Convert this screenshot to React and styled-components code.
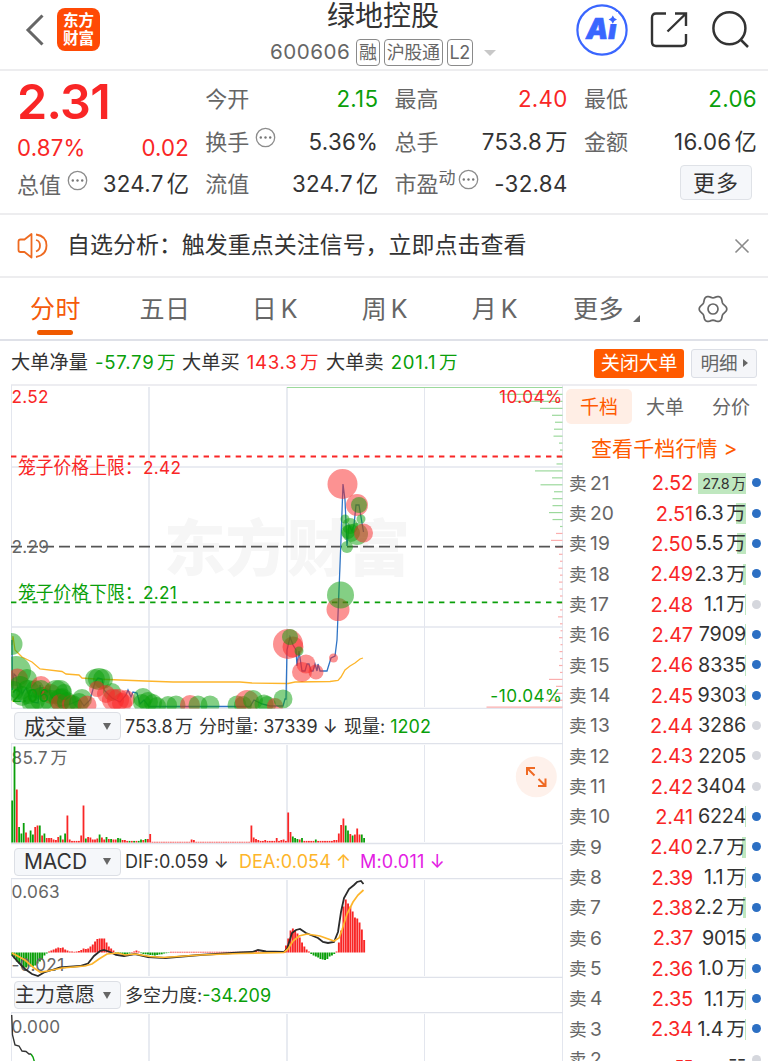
import React from "react"
import styled, { createGlobalStyle, css } from "styled-components"

const red = "#f92626"
const green = "#0a9f0a"
const orange = "#f55a0a"
const ink = "#333333"
const grey = "#666666"
const sans = `Inter, "Noto Sans CJK SC", sans-serif`

const GlobalStyle = createGlobalStyle`
  * { box-sizing: border-box; }
  html, body { margin: 0; padding: 0; }
  body {
    width: 768px;
    height: 1061px;
    overflow: hidden;
    background: #fff;
    color: ${ink};
    font-family: ${sans};
    line-height: 1;
    font-weight: 400;
  }
`

const Page = styled.div`
  width: 768px;
  height: 1061px;
  overflow: hidden;
  display: flex;
  flex-direction: column;
`

/* ---------- header ---------- */

const Header = styled.header`
  flex: none;
  height: 71px;
  border-bottom: 2px solid #ededef;
  display: grid;
  grid-template-columns: 230px 306px 1fr;
`

const HeaderLeft = styled.div`
  display: flex;
  align-items: flex-start;
  padding: 8px 0 0 24px;
`

const BackIcon = styled.svg`
  margin: 5px 13px 0 0;
`

const Logo = styled.div`
  width: 43px;
  height: 43px;
  border-radius: 8px;
  background: #ff4a05;
  color: #fff;
  font-size: 15.5px;
  font-weight: 700;
  line-height: 17.5px;
  text-align: center;
  padding-top: 4px;
`

const HeaderTitle = styled.div`
  display: flex;
  flex-direction: column;
  align-items: center;
`

const StockName = styled.h1`
  margin: 1px 0 0;
  font-size: 28px;
  line-height: 30px;
  font-weight: 400;
`

const CodeRow = styled.div`
  display: flex;
  align-items: center;
  margin-top: 8px;
  height: 27px;
  color: ${grey};
  font-size: 20.6px;
  letter-spacing: 0.45px;
`

const Tag = styled.span`
  height: 27px;
  line-height: 25px;
  margin-left: ${p => p.$gap || 4}px;
  padding: 0 2px;
  border: 1px solid #8a8a8a;
  border-radius: 4px;
  font-size: 18px;
  letter-spacing: -0.4px;
`

const Caret = styled.span`
  margin-left: 11px;
  border: 6px solid transparent;
  border-top-color: #c8c8c8;
  border-bottom: 0;
`

const HeaderRight = styled.div`
  display: flex;
  align-items: flex-start;
  padding: 3px 0 0 39px;
`

const ActionIcon = styled.svg`
  margin: ${p => p.$m};
`

/* ---------- quote ---------- */

const Quote = styled.section`
  flex: none;
  height: 144px;
  border-bottom: 2px solid #ededef;
  padding: 7px 12px 0 17px;
  display: grid;
  grid-template-columns: 171px 172px 172px 172px;
  column-gap: 17.3px;
`

const QuoteCol = styled.div`
  display: flex;
  flex-direction: column;
`

const BigPrice = styled.div`
  height: 49px;
  color: ${red};
  font-size: 48.5px;
  line-height: 47px;
  font-weight: 600;
  letter-spacing: -0.7px;
`

const Change = styled.div`
  height: 42px;
  display: flex;
  justify-content: space-between;
  align-items: center;
  color: ${red};
  font-size: 22.2px;
  letter-spacing: 0.2px;
  margin-right: -1px;
`

const Item = styled.div`
  height: ${p => p.$h || 42.5}px;
  display: flex;
  align-items: center;
  font-size: 22px;
  color: ${grey};
  white-space: nowrap;
`

const Value = styled.span`
  margin-left: auto;
  margin-right: -1px;
  font-size: 22.3px;
  letter-spacing: 0.3px;
  color: ${p => p.$color || ink};
`

const Unit = styled.span`
  margin-left: 0.14em;
  letter-spacing: 0;
`

const Sup = styled.span`
  font-size: 17px;
  margin: -11px 2px 0 0;
`

const DotsSvg = styled.svg`
  margin: -9px 0 0 ${p => p.$gap}px;
`

const MoreButton = styled.button`
  margin: 2px 4px 0 auto;
  width: 72px;
  height: 35px;
  padding: 0;
  border: 1px solid #dfe2e7;
  border-radius: 4px;
  background: #f5f7fa;
  color: ${ink};
  font: 22px/34px ${sans};
  letter-spacing: 1px;
`

/* ---------- notice ---------- */

const Notice = styled.section`
  flex: none;
  height: 63px;
  border-bottom: 2px solid #ededef;
  display: flex;
  align-items: center;
  padding: 0 18px 0 17px;
`

const NoticeText = styled.p`
  flex: 1;
  margin: 0 0 0 18px;
  font-size: 22.97px;
`

/* ---------- period tabs ---------- */

const Tabs = styled.nav`
  flex: none;
  height: 63px;
  border-bottom: 2px solid #dfe1e8;
  display: grid;
  grid-template-columns: 109px 110px 110px 110px 110px 110px 109px;
`

const Tab = styled.div`
  position: relative;
  display: flex;
  justify-content: center;
  padding: 17px 0 0 2px;
  font-size: 25px;
  line-height: 29px;
  letter-spacing: 0.5px;
  color: ${p => (p.$active ? orange : grey)};
  word-spacing: -4px;

  ${p =>
    p.$active &&
    css`
      &::after {
        content: "";
        position: absolute;
        left: 37px;
        bottom: 4px;
        width: 36px;
        height: 5px;
        border-radius: 3px;
        background: #f05a00;
      }
    `}
`

const GearSvg = styled.svg`
  margin: -1px 0 0 -4px;
`

const Corner = styled.span`
  align-self: flex-end;
  margin: 0 -3px 17px 9px;
  border-left: 7px solid transparent;
  border-bottom: 7px solid ${grey};
`

/* ---------- big-order summary ---------- */

const Summary = styled.section`
  flex: none;
  height: 45px;
  margin: 0 11px;
  padding-top: 1px;
  border-bottom: 2px solid #ededf1;
  display: flex;
  align-items: center;
  font-size: 19.2px;
  white-space: nowrap;
`

const Pair = styled.span`
  width: ${p => p.$w}px;
  letter-spacing: 0.05px;
  b {
    margin-left: 7px;
    font-size: 18.6px;
    font-weight: 400;
    letter-spacing: 0.75px;
    color: ${p => p.$color};
  }
`

const CloseOrders = styled.button`
  margin-left: auto;
  width: 90px;
  height: 29px;
  padding: 0;
  border: 0;
  border-radius: 3px;
  background: #ff5a00;
  color: #fff;
  font: 19.2px/29px ${sans};
`

const DetailButton = styled.button`
  margin-left: 7px;
  width: 66px;
  height: 29px;
  padding: 0;
  display: flex;
  align-items: center;
  justify-content: center;
  gap: 5px;
  border: 1px solid #dcdfe6;
  border-radius: 3px;
  background: #f5f6f9;
  color: ${grey};
  font: 18.6px/26px ${sans};

  &::after {
    content: "";
    border: 4px solid transparent;
    border-left: 5px solid ${grey};
    border-right: 0;
  }
`

/* ---------- body ---------- */

const Body = styled.main`
  flex: 1;
  min-height: 0;
  margin-top: -1px;
  display: grid;
  grid-template-columns: 563px 205px;
`

const Charts = styled.div`
  display: flex;
  flex-direction: column;
  overflow: hidden;
`

const Plot = styled.svg`
  flex: none;
  display: block;
  font-family: ${sans};
`

const IndicatorRow = styled.div`
  flex: none;
  height: ${p => p.$h}px;
  display: flex;
  align-items: center;
  padding-left: 14px;
  border-right: 1px solid #e3e6ee;
  font-size: 18px;
  white-space: nowrap;
`

const Select = styled.div`
  width: 107px;
  height: 28px;
  margin-right: 4px;
  display: flex;
  align-items: center;
  justify-content: ${p => (p.$tight ? "flex-start" : "center")};
  gap: ${p => (p.$tight ? 8 : 16)}px;
  border: 1px solid #dcdfe5;
  border-radius: 4px;
  background: #f5f7fa;
  font-size: ${p => p.$size}px;

  &::after {
    content: "";
    border: 4px solid transparent;
    border-top: 7px solid ${grey};
    border-bottom: 0;
  }
`

const Reading = styled.span`
  padding-top: 1px;
  color: ${p => p.$color || ink};
  width: ${p => p.$w}px;
  letter-spacing: ${p => p.$ls || 0}px;
`

/* ---------- order book ---------- */

const Book = styled.aside`
  overflow: hidden;
  padding: 4px 0 0 3px;
`

const BookTabs = styled.div`
  display: flex;
`

const BookTab = styled.div`
  width: 66px;
  height: 35px;
  line-height: 37px;
  border-radius: 5px;
  text-align: center;
  font-size: 19px;
  color: ${p => (p.$active ? "#ff5a00" : grey)};
  background: ${p => (p.$active ? "#ffeee5" : "none")};
`

const BookLink = styled.div`
  height: 44px;
  line-height: 49px;
  padding-left: 25px;
  color: #ff5a00;
  font-size: 21px;
  letter-spacing: 0.1px;
`

const Level = styled.div`
  height: 30.35px;
  display: grid;
  grid-template-columns: 48px 76px 53px 1fr;
  align-items: center;
  padding-left: 3px;
  font-size: 20px;
  white-space: nowrap;
`

const Side = styled.span`
  color: ${grey};
  font-size: 19.2px;
  i {
    font-style: normal;
    font-size: 17.6px;
    margin-right: 3.5px;
  }
`

const Ask = styled.span`
  color: ${red};
  text-align: right;
  letter-spacing: -0.2px;
`

const Volume = styled.span`
  height: 21px;
  line-height: 21px;
  display: flex;
  justify-content: flex-end;
  font-size: ${p => (p.$small ? 14.5 : 19.8)}px;
  letter-spacing: -0.2px;
  background: linear-gradient(#bfe7bf, #bfe7bf) right / ${p => p.$bar}px 100% no-repeat;
`

const Dot = styled.span`
  width: 9px;
  height: 9px;
  margin: -1px 0 0 6px;
  border-radius: 50%;
  background: ${p => (p.$on ? "#2c6fc3" : "#d5d7dd")};
`

/* ---------- data ---------- */

const levels = [
  ["21", "2.52", "27.8万", 48, 1],
  ["20", "2.51", "6.3万", 10, 1],
  ["19", "2.50", "5.5万", 9, 1],
  ["18", "2.49", "2.3万", 3.5, 1],
  ["17", "2.48", "1.1万", 1, 0],
  ["16", "2.47", "7909", 1, 1],
  ["15", "2.46", "8335", 1, 1],
  ["14", "2.45", "9303", 1, 1],
  ["13", "2.44", "3286", 0.5, 0],
  ["12", "2.43", "2205", 0.5, 0],
  ["11", "2.42", "3404", 0.5, 0],
  ["10", "2.41", "6224", 1, 1],
  ["9", "2.40", "2.7万", 4, 1],
  ["8", "2.39", "1.1万", 1, 1],
  ["7", "2.38", "2.2万", 3.5, 1],
  ["6", "2.37", "9015", 1, 1],
  ["5", "2.36", "1.0万", 1, 1],
  ["4", "2.35", "1.1万", 1, 1],
  ["3", "2.34", "1.4万", 1.5, 1],
  ["2", "--", "--", 0, 0],
]

const bubbles = [
  ["g", 11.5, 644, 11], ["g", 16, 671, 15], ["r", 17.5, 679, 10.5], ["g", 27, 679, 10],
  ["g", 20, 688, 12], ["g", 14, 691, 10], ["g", 28, 692, 12], ["g", 35, 689, 9],
  ["g", 22, 696, 10], ["g", 34, 700, 11], ["r", 41, 686, 10], ["g", 41, 690, 10],
  ["g", 42, 699, 12], ["g", 31, 704, 9], ["r", 51, 694, 10], ["g", 56, 692, 12],
  ["g", 60, 691, 11], ["g", 60, 700, 11], ["g", 51, 701, 11], ["g", 62, 698, 10],
  ["r", 60, 703, 9], ["g", 67, 702, 10], ["r", 71, 704, 9], ["g", 73, 704, 9],
  ["g", 79, 703, 10], ["g", 82, 699, 10], ["r", 87, 705, 9.5], ["g", 95, 679, 10],
  ["g", 99, 679, 11], ["g", 103, 679, 10], ["r", 97, 689, 8], ["g", 112, 692, 9],
  ["g", 64, 692, 8], ["r", 106, 694, 9], ["r", 113, 700, 11], ["r", 118, 700, 11],
  ["r", 126, 699, 9], ["r", 122, 703, 10], ["g", 143, 698, 10], ["g", 148, 702, 10],
  ["g", 142, 703, 9], ["g", 153, 703, 9], ["g", 168, 705, 9], ["g", 176, 705, 9.5],
  ["r", 190, 705, 10], ["g", 198, 705, 9.5], ["g", 210, 705, 9.5], ["g", 157, 706, 9],
  ["g", 237, 705, 9.5], ["g", 243, 705, 9], ["r", 247, 702, 12], ["g", 253, 700, 10],
  ["g", 264, 704, 9.5], ["g", 267, 705, 9], ["r", 275, 706, 8], ["g", 283, 699, 9.5],
  ["r", 288, 644, 15], ["r", 293, 647, 10.5], ["g", 290, 637, 8], ["g", 299, 651, 4.5],
  ["r", 306, 664, 9.5], ["r", 302, 672, 10], ["r", 316, 672, 7.5], ["r", 333.5, 658, 4.5],
  ["r", 338, 609.5, 11.5], ["g", 340.5, 595, 13.5], ["r", 342.5, 484, 15], ["r", 357, 505, 11],
  ["g", 359, 505, 8], ["g", 345, 519, 4.5], ["g", 361, 519, 4.5], ["g", 347, 547, 6],
  ["g", 350, 526, 8], ["g", 351, 533, 9], ["g", 348, 532, 7], ["g", 357, 534, 11],
  ["r", 363.5, 533, 9.5],
]

// left end of every depth line, 6.95px apart from the top of the price plot
const depth = [
  287, 500, 515, 540, 552, 555, 554, 553.5, 559, 560, 557, 556.5, 535, 552, 540.5, 554,
  552.5, 552.5, 549, 552.5, 560, 556, 551, 556, 559, 560, 558.5, 560, 559, 559.5, 560, 558,
  560, 558, 560, 560.5, 559, 560.5, 559.5, 560, 559, 560, 549, 556, 555, 546, 486.5,
]

const volume = {
  0: [42, "g"], 1: [96, "g"], 2: [53, "r"], 3: [15.5, "g"], 4: [9, "g"], 5: [19.5, "g"],
  6: [10, "r"], 7: [5, "r"], 8: [12, "g"], 9: [8, "g"], 10: [15.5, "r"], 11: [17, "r"],
  12: [17, "g"], 13: [7, "r"], 14: [9, "g"], 15: [4.5, "r"], 16: [4.5, "r"], 17: [4.5, "r"],
  18: [3, "r"], 19: [2.5, "r"], 20: [5.5, "r"], 21: [7, "g"], 22: [3, "r"], 23: [9, "g"],
  24: [27, "r"], 25: [3, "r"], 30: [7, "r"], 31: [37, "r"], 32: [4, "g"], 33: [5.5, "r"],
  34: [5, "r"], 35: [3, "r"], 36: [3, "r"], 37: [4, "r"], 38: [8, "g"], 39: [5, "r"],
  40: [3, "r"], 41: [5.5, "g"], 42: [3.5, "r"], 43: [3.5, "g"], 44: [3, "r"], 45: [3, "r"],
  46: [4.5, "g"], 47: [4, "g"], 48: [2.5, "r"], 49: [2.5, "r"], 56: [3, "g"], 57: [2.5, "r"],
  58: [3.5, "g"], 59: [3.5, "r"], 60: [8.5, "r"], 78: [3, "r"], 79: [2.5, "r"],
  104: [17, "r"], 105: [5, "r"], 106: [3.5, "r"], 107: [2.5, "r"], 110: [2.5, "r"],
  115: [4.5, "r"], 117: [2.5, "r"], 118: [3, "r"], 120: [30, "r"], 121: [10.5, "r"],
  122: [6, "g"], 123: [4.5, "g"], 124: [3.5, "g"], 125: [3, "r"], 126: [4.5, "g"],
  132: [3, "g"], 140: [2.5, "r"], 141: [2.5, "r"], 142: [9, "r"], 143: [17.5, "r"],
  144: [24, "r"], 145: [17, "g"], 146: [12, "g"], 147: [8.5, "r"], 148: [7, "g"],
  149: [8, "r"], 150: [14, "r"], 151: [8, "r"], 152: [8, "g"], 153: [4.5, "g"],
}

const volumeBars = Array.from({ length: 154 }, (_, i) => {
  if (volume[i]) return volume[i]
  const quiet = i > 60 && i < 104
  return [quiet ? 0.7 : 1.6, i > 48 && i < 60 && i % 2 ? "g" : "r"]
})

const macdBars = [
  -3, -6, -9, -11, -13, -15, -15, -14, -14, -14, -13, -11, -9, -7, -3, -1,
  1, 2, 3, 4, 5, 4.5, 5, 3, 2, 1, 1, 0.7, 1, 1.5, 2.5, 4, 3.5, 4, 6, 8,
  11, 13.5, 14, 14, 14, 10, 6, 4, 2, -0.7, -1.2, -1.7, -2, -2, -1.5, -1, 0.5, 1, 2, 1, -0.7,
  -1.5, -1.8, -2, -2.5, -2.7, -3, -2.5, -2, -1.8, -1, -0.7, -0.4,
  ...Array(35).fill(0.7), 1, 1.5, 1.5, 1, ...Array(10).fill(0.6), 1, 7,
  14, 22, 24, 22, 19, 15, 10, 6, 3, 1, -1.5, -3, -4, -5, -6.5, -7, -7.5, -6.5, -4, -3, -1.5, 1,
  10, 22, 46, 53, 49, 46, 41, 35, 34, 30, 23, 12.5,
]

const priceLine =
  "12,640 12.5,690 14,674 16,676 18,692 20,684 22,694 26,688 32,702 38,703 40,685 42,695 48,690 52,698 60,706 70,704 80,700 84,706 90,700 95,682 98,678 102,679 104,690 112,698 120,702 126,695 128,690 131,697 133,692 137,693 140,704 144,700 149,706.5 250,706.5 254,700 262,704 270,706 283,706 285,699 286,699 287,650 290,637 293,645 296,650 297,666 299,651 302,671 305,671 307,664 309,664 311,671 313,671 315,664 317,671 318,664 320,671 327,671 331,658 335,656 337,640 341,540 343,484 345,500 347,546 349,525 352,531 354,525 356,505 359,505 363.5,532"
const averageLine =
  "12,645 13,636 15,650 22,657 32,662 40,669 62,671.5 66,674 79,675 82,678 95,679 120,680 145,681 173,682 240,682 252,683 288,683.5 295,682 330,681.5 338,680.5 341,677 345,670 350,666 355,663 360,659 363,658"
const difLine =
  "12,955 18,962 25,969 32,974 38,976 44,972.5 52,970 60,967.5 80,966 88,963.5 94,956 100,951 104,950 110,952 116,955 124,956 135,954 148,957 165,958 200,955 240,952.5 252,952 258,950 266,951.5 284,952 287,949 292,933 296,930 300,929 306,933 318,938 323,942 328,943 334,942 338,932 341,912 344,898 349,889 354,885 357,882 361,881 363.5,884"
const deaLine =
  "12,953 25,960 34,968 40,972 48,971 62,968 85,966 92,964 99,959 107,954 118,953 125,955 135,954 150,956.5 163,957.5 200,955 240,953.5 284,952.5 288,949 293,941 299,936 307,934 320,936 334,941 339,938 342,930 347,914 353,902 358,895 363.5,890"

const paint = { r: red, g: green }

const gearPath =
  Array.from({ length: 73 }, (_, i) => {
    const a = (i * Math.PI) / 36
    const r = 12.5 + 1.3 * Math.cos(6 * a)
    return `${i ? "L" : "M"}${(15 + r * Math.cos(a)).toFixed(2)} ${(15 + r * Math.sin(a)).toFixed(2)}`
  }).join("") + "Z"

/* ---------- pieces ---------- */

const Amount = ({ children }) => {
  const unit = /[万亿]$/.test(children) ? children.slice(-1) : ""
  return (
    <>
      {unit ? children.slice(0, -1) : children}
      {unit && <Unit>{unit}</Unit>}
    </>
  )
}

const Dots = ({ gap = 6 }) => (
  <DotsSvg $gap={gap} width="21" height="21" viewBox="0 0 21 21">
    <circle cx="10.5" cy="10.5" r="9.2" fill="none" stroke="#8c8c8c" strokeWidth="1.3" />
    <g fill="#777">
      <circle cx="5.8" cy="10.5" r="1.2" />
      <circle cx="10.5" cy="10.5" r="1.2" />
      <circle cx="15.2" cy="10.5" r="1.2" />
    </g>
  </DotsSvg>
)

const Grid = ({ top, bottom }) => (
  <g stroke="#e3e6ee" fill="none">
    <path d={`M11.5 ${top}V${bottom}M562.5 ${top}V${bottom}`} />
    <path d={`M149 ${top + 2}V${bottom - 2}M287 ${top + 2}V${bottom - 2}`} strokeWidth="1.6" />
    <path d={`M424.5 ${top + 2}V${bottom - 2}`} />
  </g>
)

const PricePlot = () => (
  <Plot width="563" height="324" viewBox="0 385 563 324">
    <clipPath id="price">
      <rect x="11" y="385" width="552" height="323.5" />
    </clipPath>
    <text x="164" y="570.5" fontSize="61.5" fontWeight="900" fill="#f6f6f6">东方财富</text>
    <Grid top={385} bottom={709} />
    <path d="M11 467H563M11 627H563M11 708.5H563" stroke="#e3e6ee" strokeWidth="1.5" />
    <g strokeWidth="1.2">
      {depth.map((x, i) => (
        <path
          key={i}
          d={`M${x} ${387.5 + i * 6.95}H562.5`}
          stroke={i < 21 ? "#9cd99c" : "#fbaeae"}
        />
      ))}
    </g>
    <path d="M11 456.5H563" stroke={red} strokeWidth="1.8" strokeDasharray="5.4 5.3" />
    <path d="M11 546.7H563" stroke="#555" strokeWidth="1.7" strokeDasharray="11 5" />
    <path d="M11 602.4H563" stroke={green} strokeWidth="1.8" strokeDasharray="5.4 5.3" />
    <g fontSize="17.2" letterSpacing="0.3">
      <text x="11.5" y="402.5" fill={red}>2.52</text>
      <text x="562.5" y="402.5" fill={red} textAnchor="end" letterSpacing="0.45">10.04%</text>
      <text x="11.5" y="552.5" fill={grey}>2.29</text>
      <text x="562.5" y="701.5" fill={green} textAnchor="end" letterSpacing="0.5">-10.04%</text>
      <text x="18" y="474" fontSize="17.8" letterSpacing="0" fill={red}>笼子价格上限：</text>
      <text x="143" y="474" fill={red}>2.42</text>
      <text x="18" y="598.5" fontSize="17.8" letterSpacing="0" fill={green}>笼子价格下限：</text>
      <text x="143" y="598.5" fill={green}>2.21</text>
    </g>
    <g clipPath="url(#price)">
      <polyline points={averageLine} fill="none" stroke="#fdb52b" strokeWidth="1.3" />
      <polyline points={priceLine} fill="none" stroke="#2f74c5" strokeWidth="1.3" />
      {bubbles.map(([c, x, y, r], i) => (
        <circle key={i} cx={x} cy={y} r={r} fill={paint[c]} fillOpacity="0.5" />
      ))}
      <text x="11.5" y="701.5" fontSize="17.2" letterSpacing="0.3" fill={green}>2.06</text>
    </g>
  </Plot>
)

const VolumePlot = () => (
  <Plot width="563" height="102" viewBox="0 743 563 102">
    <Grid top={743} bottom={844} />
    <path d="M11 743.5H563M11 843.5H563" stroke="#dfe2ea" strokeWidth="1.4" />
    <text x="11.5" y="763.5" fontSize="17.2" letterSpacing="0.3" fill={grey}>85.7</text>
    <text x="50.5" y="763.5" fontSize="17" fill={grey}>万</text>
    {volumeBars.map(([h, c], i) => (
      <rect key={i} x={11.3 + i * 2.3} y={842.5 - h} width="1.8" height={h} fill={paint[c]} />
    ))}
    <circle cx="536.3" cy="776.7" r="20.5" fill="#fef1eb" />
    <g fill="none" stroke="#ef6a24" strokeWidth="2">
      <path d="M527 775V768H535M527.5 768.5L534.5 775.5" />
      <path d="M538 786H545.5V778.5M545 785.5L538.5 779" />
    </g>
  </Plot>
)

const MacdPlot = () => (
  <Plot width="563" height="100" viewBox="0 878 563 100">
    <Grid top={878} bottom={978} />
    <path d="M11 878.5H563M11 977.5H563" stroke="#dfe2ea" strokeWidth="1.4" />
    {macdBars.map((v, i) => (
      <rect
        key={i}
        x={11.3 + i * 2.3}
        y={v > 0 ? 952.5 - v : 952.5}
        width="1.9"
        height={Math.abs(v)}
        fill={v > 0 ? red : green}
      />
    ))}
    <g fontSize="17.2" letterSpacing="0.3" fill={grey}>
      <text x="11.5" y="898">0.063</text>
      <text x="11.5" y="970.5">-0.021</text>
    </g>
    <polyline points={difLine} fill="none" stroke="#2b2b2b" strokeWidth="1.8" />
    <polyline points={deaLine} fill="none" stroke="#fdb52b" strokeWidth="1.7" />
  </Plot>
)

const IntentPlot = () => (
  <Plot width="563" height="50" viewBox="0 1012 563 50">
    <Grid top={1012} bottom={1070} />
    <path d="M11 1012.5H563" stroke="#dfe2ea" strokeWidth="1.4" />
    <text x="11.5" y="1032.5" fontSize="17.2" letterSpacing="0.3" fill={grey}>0.000</text>
    <g fill="none" strokeWidth="1.4">
      <path d="M11.7 1015L12.5 1035L15 1045L19 1046L22 1051L26 1051.5L29 1054H31" stroke="#333" />
      <path d="M31 1054L33 1057L34.5 1062" stroke={green} />
    </g>
  </Plot>
)

const App = () => (
  <Page>
    <GlobalStyle />
    <Header>
      <HeaderLeft>
        <BackIcon width="20" height="34" viewBox="0 0 20 34">
          <path d="M18.5 2.5L4 17L18.5 31.5" fill="none" stroke="#666" strokeWidth="3" />
        </BackIcon>
        <Logo>东方<br />财富</Logo>
      </HeaderLeft>
      <HeaderTitle>
        <StockName>绿地控股</StockName>
        <CodeRow>
          600606
          <Tag $gap={6}>融</Tag>
          <Tag>沪股通</Tag>
          <Tag>L2</Tag>
          <Caret />
        </CodeRow>
      </HeaderTitle>
      <HeaderRight>
        <ActionIcon $m="0" width="54" height="54" viewBox="0 0 54 54">
          <circle cx="27" cy="27" r="24.6" fill="none" stroke="#3a66ff" strokeWidth="2.2" />
          <text x="11" y="36" fontFamily="Inter" fontSize="28" fontWeight="900" fontStyle="italic" fill="#3a66ff" stroke="#3a66ff" strokeWidth="0.6">Ai</text>
          <path d="M31 9H43V21H31Z" fill="#fff" />
          <path d="M37.8 12.5Q38.8 15.6 42 16.6Q38.8 17.6 37.8 20.7Q36.8 17.6 33.6 16.6Q36.8 15.6 37.8 12.5Z" fill="#3a66ff" />
        </ActionIcon>
        <ActionIcon $m="7px 0 0 20px" width="40" height="40" viewBox="0 0 40 40" fill="none" stroke="#333" strokeWidth="2.4">
          <path d="M17 3.5H7Q3 3.5 3 7.5V32Q3 36 7 36H33Q37 36 37 32V24" />
          <path d="M26 3.5H37V16M37 3.5L18.5 21.5" />
        </ActionIcon>
        <ActionIcon $m="7px 0 0 21px" width="42" height="42" viewBox="0 0 42 42" fill="none" stroke="#333" strokeWidth="2.5">
          <circle cx="19.4" cy="18.3" r="16" />
          <path d="M30.5 29.5L38 37" />
        </ActionIcon>
      </HeaderRight>
    </Header>

    <Quote>
      <QuoteCol>
        <BigPrice>2.31</BigPrice>
        <Change><span>0.87%</span><span>0.02</span></Change>
        <Item $h={31}>总值<Dots /><Value><Amount>324.7亿</Amount></Value></Item>
      </QuoteCol>
      <QuoteCol>
        <Item>今开<Value $color={green}>2.15</Value></Item>
        <Item>换手<Dots /><Value>5.36%</Value></Item>
        <Item>流值<Value><Amount>324.7亿</Amount></Value></Item>
      </QuoteCol>
      <QuoteCol>
        <Item>最高<Value $color={red}>2.40</Value></Item>
        <Item>总手<Value><Amount>753.8万</Amount></Value></Item>
        <Item>市盈<Sup>动</Sup><Dots gap={0} /><Value>-32.84</Value></Item>
      </QuoteCol>
      <QuoteCol>
        <Item>最低<Value $color={green}>2.06</Value></Item>
        <Item>金额<Value><Amount>16.06亿</Amount></Value></Item>
        <MoreButton>更多</MoreButton>
      </QuoteCol>
    </Quote>

    <Notice>
      <svg width="32" height="28" viewBox="0 0 32 28" fill="none" stroke="#ee6a20" strokeWidth="1.8">
        <path d="M14.5 2V25.5L7.5 20H3.5Q1.5 20 1.5 18V9.5Q1.5 7.5 3.5 7.5H7.5Z" strokeLinejoin="round" />
        <path d="M19 8Q23 9 23 13.5Q23 18 19 19.5M19 2.5Q29.5 4 29.5 13.5Q29.5 23 19 25" />
      </svg>
      <NoticeText>自选分析：触发重点关注信号，立即点击查看</NoticeText>
      <svg width="16" height="16" viewBox="0 0 16 16">
        <path d="M1.5 1.5L14.5 14.5M14.5 1.5L1.5 14.5" stroke="#8a8a8a" strokeWidth="1.6" />
      </svg>
    </Notice>

    <Tabs>
      <Tab $active>分时</Tab>
      <Tab>五日</Tab>
      <Tab>日 K</Tab>
      <Tab>周 K</Tab>
      <Tab>月 K</Tab>
      <Tab>更多<Corner /></Tab>
      <Tab>
        <GearSvg width="30" height="30" viewBox="0 0 30 30" fill="none" stroke={grey} strokeWidth="1.7">
          <path d={gearPath} />
          <circle cx="15" cy="15" r="5" />
        </GearSvg>
      </Tab>
    </Tabs>

    <Summary>
      <Pair $w={171} $color={green}>大单净量<b><Amount>-57.79万</Amount></b></Pair>
      <Pair $w={144} $color={red}>大单买<b><Amount>143.3万</Amount></b></Pair>
      <Pair $w={140} $color={green}>大单卖<b><Amount>201.1万</Amount></b></Pair>
      <CloseOrders>关闭大单</CloseOrders>
      <DetailButton>明细</DetailButton>
    </Summary>

    <Body>
      <Charts>
        <PricePlot />
        <IndicatorRow $h={34}>
          <Select $size={21}>成交量</Select>
          <Reading $w={74}><Amount>753.8万</Amount></Reading>
          <Reading $w={145}>分时量: 37339 ↓</Reading>
          <Reading>现量: </Reading>
          <Reading $color={green}>&nbsp;1202</Reading>
        </IndicatorRow>
        <VolumePlot />
        <IndicatorRow $h={33}>
          <Select $size={21}>MACD</Select>
          <Reading $w={114} $ls={0.1}>DIF:0.059 ↓</Reading>
          <Reading $w={121} $color="#fdb52b" $ls={0.1}>DEA:0.054 ↑</Reading>
          <Reading $color="#e320e3" $ls={0.2}>M:0.011 ↓</Reading>
        </IndicatorRow>
        <MacdPlot />
        <IndicatorRow $h={34}>
          <Select $size={20} $tight>主力意愿</Select>
          <Reading>多空力度:</Reading>
          <Reading $color={green}>-34.209</Reading>
        </IndicatorRow>
        <IntentPlot />
      </Charts>

      <Book>
        <BookTabs>
          <BookTab $active>千档</BookTab>
          <BookTab>大单</BookTab>
          <BookTab>分价</BookTab>
        </BookTabs>
        <BookLink>查看千档行情 &gt;</BookLink>
        {levels.map(([n, price, amount, bar, on]) => (
          <Level key={n}>
            <Side><i>卖</i>{n}</Side>
            <Ask>{price}</Ask>
            <Volume $bar={bar} $small={n === "21"}><Amount>{amount}</Amount></Volume>
            <Dot $on={on} />
          </Level>
        ))}
      </Book>
    </Body>
  </Page>
)

export default App
